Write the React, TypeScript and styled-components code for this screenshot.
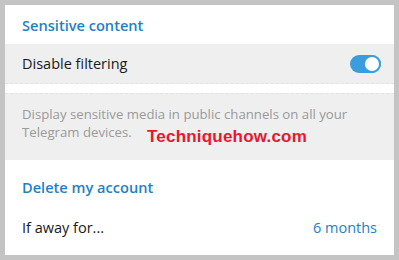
import React from 'react';
import styled, {createGlobalStyle} from 'styled-components';

const GlobalStyle = createGlobalStyle`
  html, body {
    margin: 0;
    padding: 0;
    background: #c4c4c4;
  }
  body {
    font-family: "Open Sans", "Noto Sans", sans-serif;
  }
`;

const Frame = styled.div`
  width: 399px;
  height: 260px;
  box-sizing: border-box;
  padding: 5px;
  background: #c4c4c4;
`;

const Panel = styled.div`
  position: relative;
  height: 250px;
  width: 389px;
  background: #ffffff;
  display: flex;
  flex-direction: column;
  overflow: hidden;
`;

const SectionTitle = styled.div<{ $height: number }>`
  height: ${({$height}) => $height}px;
  display: flex;
  align-items: center;
  padding: 0 17px;
  color: #1f7fc8;
  font-size: 14.6px;
  font-weight: 600;
`;

const Row = styled.div<{ $shaded?: boolean; $height: number }>`
  height: ${({$height}) => $height}px;
  display: flex;
  align-items: center;
  justify-content: space-between;
  padding: 0 13px 0 17px;
  background: ${({$shaded}) => ($shaded ? '#efefef' : 'transparent')};
  color: #1a1a1a;
  font-size: 14.5px;
  box-sizing: border-box;
  border-bottom: ${({$shaded}) => ($shaded ? '1px dashed #e2e2e2' : 'none')};
`;

const Value = styled.span`
  color: #1f7fc8;
  padding-right: 4px;
`;

const Spacer = styled.div`
  height: 9px;
`;

const Note = styled.div`
  height: 67px;
  box-sizing: border-box;
  background: #efefef;
  border-top: 1px dashed #e2e2e2;
  padding: 12px 17px 0;
  color: #9a9a9a;
  font-size: 13.2px;
  line-height: 17.5px;
`;

const Toggle = styled.div<{ $on: boolean }>`
  position: relative;
  width: 31px;
  height: 18px;
  border-radius: 9px;
  background: ${({$on}) => ($on ? '#3a9ede' : '#c9c9c9')};

  &::after {
    content: '';
    position: absolute;
    top: 0;
    ${({$on}) => ($on ? 'right: 0;' : 'left: 0;')}
    width: 14px;
    height: 14px;
    border-radius: 50%;
    background: #ffffff;
    border: 2px solid ${({$on}) => ($on ? '#3a9ede' : '#c9c9c9')};
  }
`;

const Watermark = styled.div`
  position: absolute;
  left: 142px;
  top: 122px;
  font-family: "Liberation Sans", Arial, sans-serif;
  font-weight: 700;
  font-size: 17px;
  color: #ea1530;
  letter-spacing: 0.2px;
`;

export default function App() {
  return (
    <>
      <GlobalStyle/>
      <Frame>
        <Panel>
          <SectionTitle $height={39}>Sensitive content</SectionTitle>
          <Row $shaded $height={40}>
            <span>Disable filtering</span>
            <Toggle $on/>
          </Row>
          <Spacer/>
          <Note>
            Display sensitive media in public channels on all your Telegram devices.
          </Note>
          <SectionTitle $height={54}>Delete my account</SectionTitle>
          <Row $height={26}>
            <span>If away for...</span>
            <Value>6 months</Value>
          </Row>
          <Watermark>Techniquehow.com</Watermark>
        </Panel>
      </Frame>
    </>
  );
}
